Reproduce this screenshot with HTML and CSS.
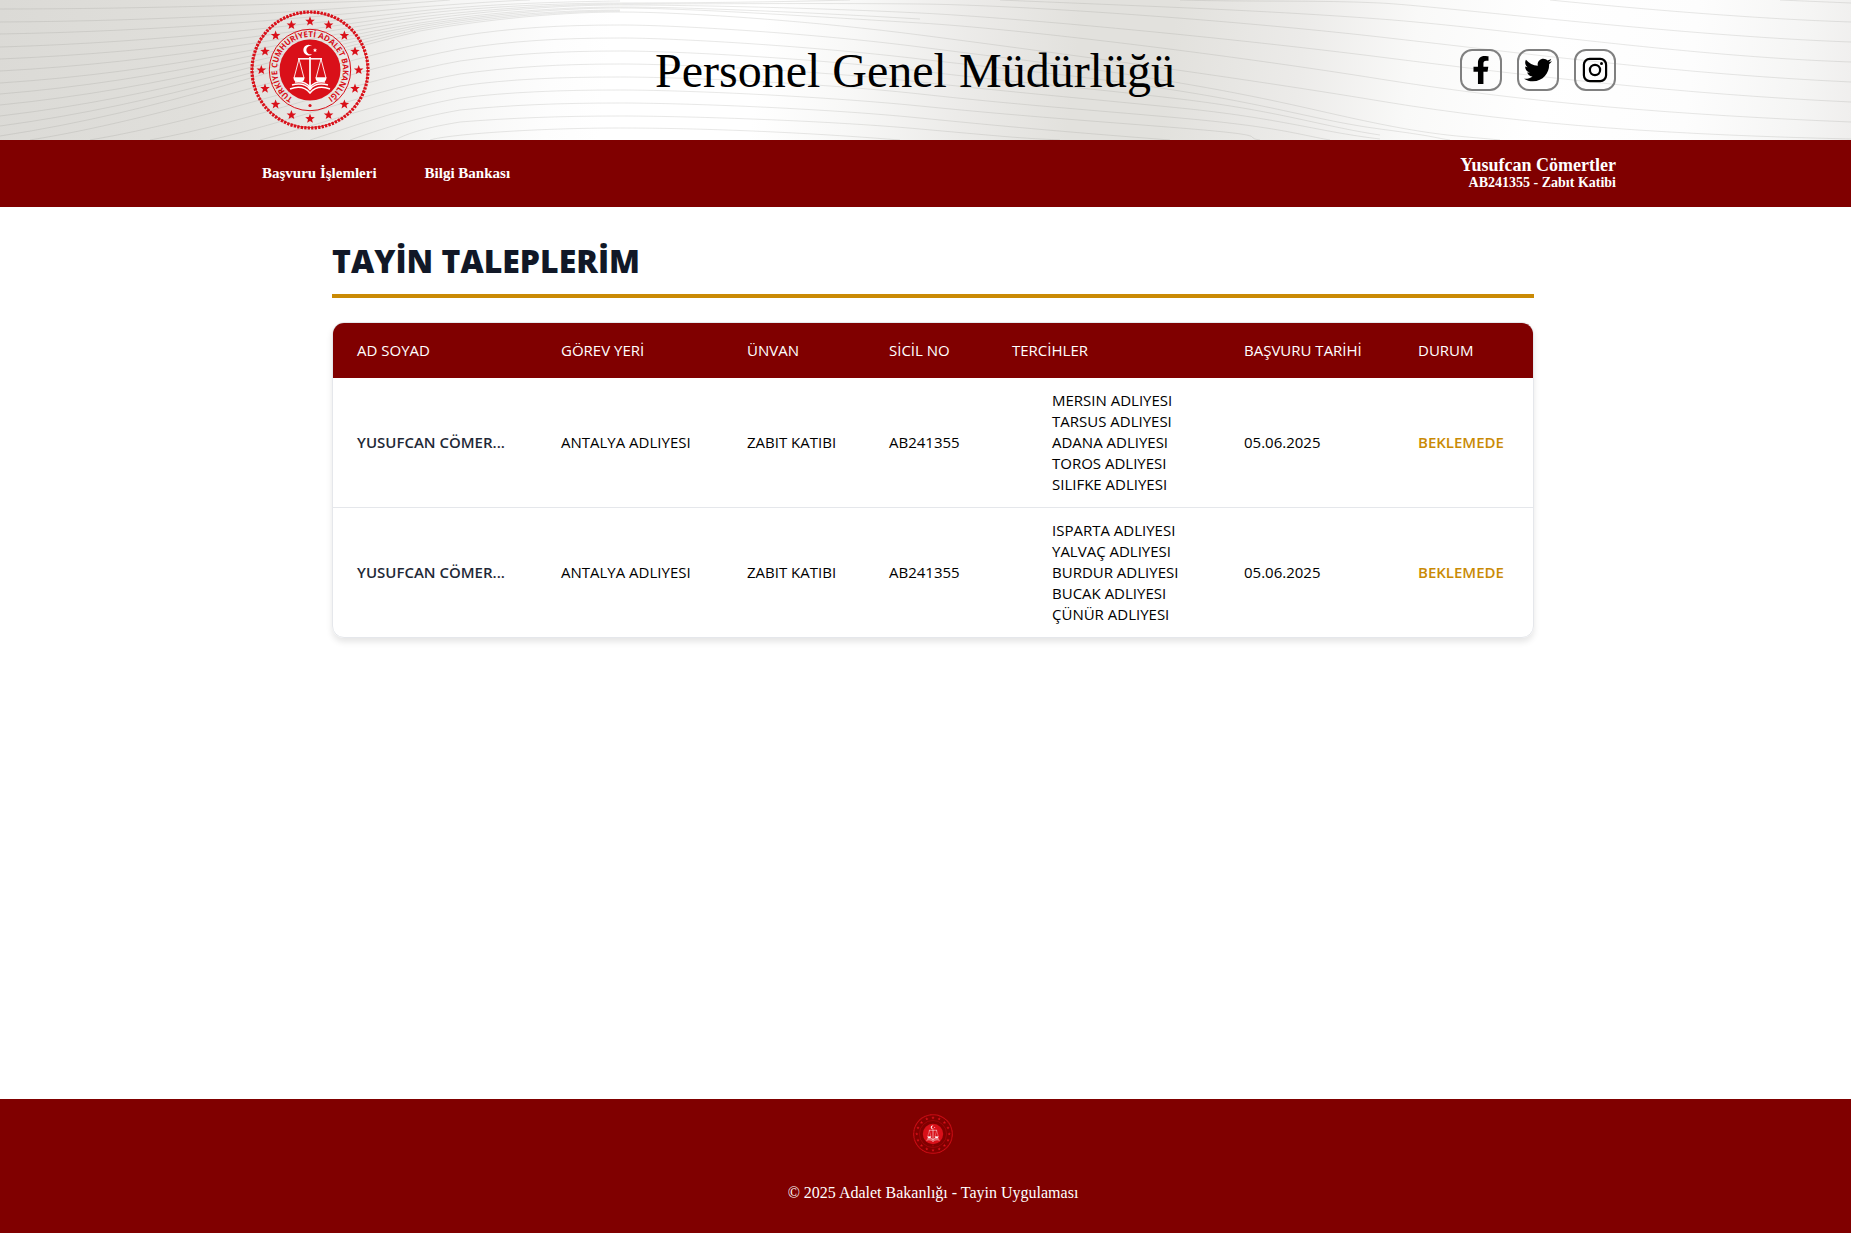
FILE: index.html
```html
<!DOCTYPE html>
<html lang="tr">
<head>
<meta charset="utf-8">
<meta name="viewport" content="width=device-width, initial-scale=1">
<title>Personel Genel Müdürlüğü</title>
<link rel="stylesheet" href="styles.css">
</head>
<body>
<svg class="defs" aria-hidden="true">
  <defs>
    <path id="star" d="M0-5 1.3-1.6 4.8-1.5 2 .7 2.9 4.1 0 2.2-2.9 4.1-2 .7-4.8-1.5-1.3-1.6z"/>
    <symbol id="emblem" viewBox="0 0 120 120">
      <g fill="none" stroke="#d91019">
        <circle cx="60" cy="60" r="58" stroke-width="3.2" stroke-dasharray="2.3 1.2"/>
        <circle cx="60" cy="60" r="57.6" stroke-width=".8"/>
        <circle cx="60" cy="60" r="40.7"/>
      </g>
      <g fill="#d91019">
        <circle cx="60" cy="60" r="30.5"/>
        <circle cx="60" cy="95.5" r="1.6"/>
        <use href="#star" x="60" y="11.3"/><use href="#star" x="78.6" y="15"/>
        <use href="#star" x="94.4" y="25.6"/><use href="#star" x="105" y="41.4"/>
        <use href="#star" x="108.7" y="60"/><use href="#star" x="105" y="78.6"/>
        <use href="#star" x="94.4" y="94.4"/><use href="#star" x="78.6" y="105"/>
        <use href="#star" x="60" y="108.7"/><use href="#star" x="41.4" y="105"/>
        <use href="#star" x="25.6" y="94.4"/><use href="#star" x="15" y="78.6"/>
        <use href="#star" x="11.3" y="60"/><use href="#star" x="15" y="41.4"/>
        <use href="#star" x="25.6" y="25.6"/><use href="#star" x="41.4" y="15"/>
      </g>
      <path fill="#fff" d="M62.3 36.3a5.3 5.3 0 1 0 0 7.6 4.2 4.2 0 1 1 0-7.6zM65 38l.6 1.4 1.5.1-1.1 1 .3 1.5-1.3-.8-1.3.8.3-1.5-1.1-1 1.5-.1z"/>
      <g fill="none" stroke="#fff">
        <path d="M48 48.800h24" stroke-width="1.5"/>
        <path d="M60 47v32" stroke-width="1.7"/>
        <path d="M49 49l-5 19h10zM71 49l-5 19h10z" stroke-width=".9"/>
        <path d="M40 79c8-3 15-2 20 4 5-6 12-7 20-4M42 75c8-2 14-1 18 4.500 4-5.500 10-6.500 18-4.500M45 72c6-1 11 0 15 5 4-5 9-6 15-5" stroke-width="1.5"/>
      </g>
      <path fill="#fff" d="M43.500 67.500h11c0 4-3 4.500-5.500 4.500s-5.500-.5-5.500-4.500zM65.500 67.500h11c0 4-3 4.500-5.500 4.500s-5.500-.5-5.500-4.500z"/>
    </symbol>
  </defs>
</svg>

<header class="masthead">
  <svg class="waves" viewBox="0 0 1851 140" preserveAspectRatio="none" aria-hidden="true">
    <g fill="none" stroke="#8c8c88" stroke-opacity=".2">
      <path d="M0 9C150 9 280 4 400 0"/>
      <path d="M0 22C170 21 300 12 450 0"/>
      <path d="M0 34C170 31 300 18 420 7C460 4 500 1 530 0"/>
      <path d="M0 47C170 42 300 24 420 11C470 6 530 2 620 1"/>
      <path d="M0 59C170 52 300 30 420 14C470 8 550 3 620 3S780 2 850 0"/>
      <path d="M0 71C170 62 300 34 420 17C470 11 550 4 620 4S820 3 920 4S1230 20 1380 37S1680 74 1851 82"/>
      <path d="M0 83C170 72 290 40 420 20C470 13 550 5 620 5S820 8 920 13S1230 38 1380 57S1680 94 1851 102"/>
      <path d="M0 94C170 80 290 44 420 23C470 15 550 7 620 7S820 13 920 19"/>
      <path d="M0 105C170 88 290 49 420 25C470 17 550 8 620 8S820 17 920 23S1230 55 1380 79S1680 115 1851 122"/>
      <path d="M0 116C170 96 290 53 420 27C470 18 550 10 620 10"/>
      <path d="M0 126C170 103 290 58 420 29C470 20 550 11 620 11"/>
      <path d="M0 136C170 110 290 62 420 31C470 22 550 12 620 12S820 22 920 35S1230 76 1380 101S1680 135 1851 139"/>
      <path d="M30 140C180 116 350 54 460 36C510 28 560 25 620 25S820 34 920 47S1080 66 1180 83S1320 112 1380 124S1460 136 1500 140"/>
      <path d="M90 140C210 120 360 67 460 49C510 41 560 38 620 38S820 47 920 59S1080 75 1180 91S1320 121 1380 129S1430 137 1450 140"/>
      <path d="M150 140C250 122 370 77 460 61C510 54 560 51 620 51S820 59 920 71S1080 87 1180 99S1320 126 1380 135"/>
      <path d="M210 140C290 122 380 88 460 74C510 67 560 64 620 64S820 71 920 82S1080 98 1180 108S1320 132 1380 139"/>
      <path d="M260 140C330 122 390 99 460 86C510 79 560 77 620 77S820 83 920 94S1080 109 1180 118S1300 135 1330 140"/>
      <path d="M310 140C360 124 400 109 460 98C510 92 560 90 620 90S820 96 920 106S1080 120 1180 128S1240 137 1260 140"/>
      <path d="M350 140C390 126 420 117 460 110C510 105 560 103 620 103S820 108 920 118S1080 133 1170 140"/>
      <path d="M395 140C410 132 430 127 460 122C510 118 560 116 620 116S820 120 920 129S1020 138 1060 140"/>
      <path d="M430 140C450 134 540 128 620 128S800 132 900 140"/>
      <path d="M1000 0C1140 6 1260 10 1380 19S1680 56 1851 62"/>
      <path d="M1180 0C1250 2 1320 0 1380 3S1680 36 1851 42"/>
      <path d="M1550 0C1650 10 1760 19 1851 22"/>
      <path d="M1780 0L1851 3"/>
    </g>
  </svg>
  <div class="wrap masthead-row">
    <a class="logo" href="#" aria-label="Adalet Bakanlığı">
      <svg width="120" height="120" viewBox="0 0 120 120" aria-hidden="true">
        <use href="#emblem"/>
        <path id="ring" fill="none" d="M43.100 88.200A32.900 32.900 0 1 1 76.900 88.200"/>
        <text class="seal-text"><textPath href="#ring">TÜRKİYE CUMHURİYETİ ADALET BAKANLIĞI</textPath></text>
      </svg>
    </a>
    <h1 class="site-title">Personel Genel Müdürlüğü</h1>
    <div class="social">
      <a href="#" aria-label="Facebook"><svg width="28" height="28" viewBox="0 0 320 512"><path d="M279.140 288l14.220-92.660h-88.910v-60.130c0-25.350 12.420-50.060 52.240-50.060h40.420V6.260S260.430 0 225.360 0c-73.220 0-121.080 44.380-121.080 124.720v70.620H22.890V288h81.390v224h100.170V288z"/></svg></a>
      <a href="#" aria-label="Twitter"><svg width="28" height="28" viewBox="0 0 512 512"><path d="M459.370 151.716c.325 4.548.325 9.097.325 13.645 0 138.720-105.583 298.558-298.558 298.558-59.452 0-114.680-17.219-161.137-47.106 8.447.974 16.568 1.299 25.340 1.299 49.055 0 94.213-16.568 130.274-44.832-46.132-.975-84.792-31.188-98.112-72.772 6.498.974 12.995 1.624 19.818 1.624 9.421 0 18.843-1.300 27.614-3.573-48.081-9.747-84.143-51.980-84.143-102.985v-1.299c13.969 7.797 30.214 12.670 47.431 13.319-28.264-18.843-46.781-51.005-46.781-87.391 0-19.492 5.197-37.360 14.294-52.954 51.655 63.675 129.300 105.258 216.365 109.807-1.624-7.797-2.599-15.918-2.599-24.040 0-57.828 46.782-104.934 104.934-104.934 30.213 0 57.502 12.670 76.670 33.137 23.715-4.548 46.456-13.320 66.599-25.340-7.798 24.366-24.366 44.833-46.132 57.827 21.117-2.273 41.584-8.122 60.426-16.243-14.292 20.791-32.161 39.308-52.628 54.253z"/></svg></a>
      <a href="#" aria-label="Instagram"><svg width="28" height="28" viewBox="0 0 28 28"><g fill="none" stroke="#000" stroke-width="2.200"><rect x="2.900" y="2.900" width="22.200" height="22.200" rx="5.800"/><circle cx="14" cy="14" r="5.100"/></g><circle cx="20.500" cy="7.500" r="1.500"/></svg></a>
    </div>
  </div>
</header>

<nav class="navbar">
  <div class="wrap navbar-row">
    <div class="menu">
      <a href="#">Başvuru İşlemleri</a>
      <a href="#">Bilgi Bankası</a>
    </div>
    <div class="user">
      <div class="user-name">Yusufcan Cömertler</div>
      <div class="user-role">AB241355 - Zabıt Katibi</div>
    </div>
  </div>
</nav>

<main class="content">
  <h2 class="page-title">TAYİN TALEPLERİM</h2>
  <div class="card">
    <table class="requests">
      <colgroup>
        <col class="c-name"><col class="c-place"><col class="c-title"><col class="c-id"><col class="c-prefs"><col class="c-date"><col class="c-status">
      </colgroup>
      <thead>
        <tr><th>AD SOYAD</th><th>GÖREV YERİ</th><th>ÜNVAN</th><th>SİCİL NO</th><th>TERCİHLER</th><th>BAŞVURU TARİHİ</th><th>DURUM</th></tr>
      </thead>
      <tbody>
        <tr>
          <td class="name">YUSUFCAN CÖMER...</td><td>ANTALYA ADLIYESI</td><td>ZABIT KATIBI</td><td>AB241355</td>
          <td><ul class="prefs"><li>MERSIN ADLIYESI</li><li>TARSUS ADLIYESI</li><li>ADANA ADLIYESI</li><li>TOROS ADLIYESI</li><li>SILIFKE ADLIYESI</li></ul></td>
          <td>05.06.2025</td><td class="status">BEKLEMEDE</td>
        </tr>
        <tr>
          <td class="name">YUSUFCAN CÖMER...</td><td>ANTALYA ADLIYESI</td><td>ZABIT KATIBI</td><td>AB241355</td>
          <td><ul class="prefs"><li>ISPARTA ADLIYESI</li><li>YALVAÇ ADLIYESI</li><li>BURDUR ADLIYESI</li><li>BUCAK ADLIYESI</li><li>ÇÜNÜR ADLIYESI</li></ul></td>
          <td>05.06.2025</td><td class="status">BEKLEMEDE</td>
        </tr>
      </tbody>
    </table>
  </div>
</main>

<footer class="footer">
  <svg class="footer-logo" width="40" height="40" aria-hidden="true"><use href="#emblem"/></svg>
  <p>© 2025 Adalet Bakanlığı - Tayin Uygulaması</p>
</footer>
</body>
</html>
```
FILE: styles.css
```css
* {
  box-sizing: border-box;
}

body {
  margin: 0;
  min-height: 100vh;
  display: flex;
  flex-direction: column;
  background: #fff;
  color: #000;
  font-family: "Liberation Serif", "Times New Roman", serif;
}

h1, h2, p, ul {
  margin: 0;
  padding: 0;
}

a {
  color: inherit;
  text-decoration: none;
}

.defs {
  position: absolute;
  width: 0;
  height: 0;
}

.wrap {
  width: 100%;
  max-width: 1381px;
  margin: 0 auto;
  padding-left: 15px;
  display: flex;
  align-items: center;
  justify-content: space-between;
}

/* Masthead */
.masthead {
  position: relative;
  padding: 10px 0;
  background: linear-gradient(97deg, #dbdad6 0%, #e0dfdb 11%, #e8e7e4 18%, #f5f5f4 24%, #fdfdfd 30%, #fff 33%, #fff 41%, #f8f8f7 46%, #ecebe9 52%, #e2e1dd 58%, #e2e1dd 63%, #ecebe9 70%, #f9f9f8 76%, #fff 83%, #fdfdfd 91%, #f5f5f4 97%, #efeeed 100%);
}

.waves {
  position: absolute;
  inset: 0;
  width: 100%;
  height: 100%;
}

.masthead-row {
  position: relative;
}

.logo,
.logo svg {
  display: block;
}

.seal-text {
  fill: #d91019;
  font-family: "Open Sans", sans-serif;
  font-size: 8px;
  font-weight: 700;
}

.site-title {
  padding-top: 2px;
  font-size: 48px;
  line-height: 56px;
  font-weight: 400;
}

.social {
  display: flex;
  gap: 15px;
}

.social a {
  width: 42px;
  height: 42px;
  display: flex;
  align-items: center;
  justify-content: center;
  border: 2px solid #808080;
  border-radius: 12px;
}

/* Navigation */
.navbar {
  background: #800000;
  color: #fff;
  font-weight: 700;
}

.navbar-row {
  min-height: 67px;
}

.menu {
  display: flex;
  gap: 48px;
  padding-left: 12px;
  font-size: 15px;
  line-height: 19px;
}

.user {
  text-align: right;
}

.user-name {
  font-size: 18px;
  line-height: 18px;
}

.user-role {
  font-size: 14px;
  line-height: 18px;
}

/* Requests */
.content {
  flex: 1;
  width: 100%;
  max-width: 1217px;
  margin: 0 auto;
  padding: 32px 0 32px 15px;
  font-family: "Open Sans", sans-serif;
}

.page-title {
  padding-bottom: 11px;
  border-bottom: 4px solid #ca8a04;
  color: #111827;
  font-size: 32px;
  line-height: 44px;
  font-weight: 800;
}

.card {
  margin-top: 24px;
  overflow: hidden;
  border: 1px solid #e5e7eb;
  border-radius: 12px;
  box-shadow: 0 4px 6px rgba(0, 0, 0, 0.1);
}

.requests {
  width: 100%;
  table-layout: fixed;
  border-collapse: separate;
  border-spacing: 0;
  font-size: 15px;
  line-height: 21px;
}

.c-name { width: 204px; }
.c-place { width: 186px; }
.c-title { width: 142px; }
.c-id { width: 123px; }
.c-prefs { width: 232px; }
.c-date { width: 174px; }
.c-status { width: 139px; }

.requests th {
  padding: 17px 0 17px 24px;
  background: #800000;
  color: #fff;
  font-weight: 400;
  text-align: left;
}

.requests td {
  padding: 12px 0 12px 24px;
}

.requests tbody tr + tr td {
  border-top: 1px solid #e5e7eb;
}

.requests .name {
  color: #1f2937;
  font-weight: 600;
}

.requests .status {
  color: #ca8a04;
  font-weight: 600;
}

.prefs {
  padding-left: 40px;
  list-style: none;
}

/* Footer */
.footer {
  display: flex;
  flex-direction: column;
  align-items: center;
  gap: 30px;
  padding: 15px 0 31px 15px;
  background: #800000;
  color: #fff;
  font-size: 16px;
  line-height: 18px;
}
```
